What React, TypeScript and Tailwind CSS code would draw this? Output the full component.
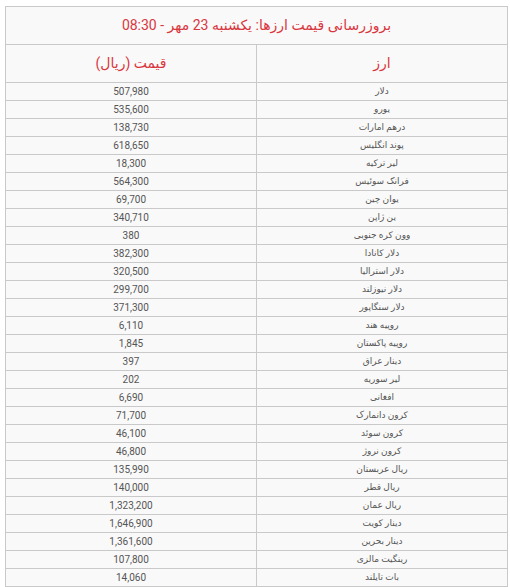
const rows: [string, string][] = [
  ['دلار', '507,980'],
  ['یورو', '535,600'],
  ['درهم امارات', '138,730'],
  ['پوند انگلیس', '618,650'],
  ['لیر ترکیه', '18,300'],
  ['فرانک سوئیس', '564,300'],
  ['یوان چین', '69,700'],
  ['ین ژاپن', '340,710'],
  ['وون کره جنوبی', '380'],
  ['دلار کانادا', '382,300'],
  ['دلار استرالیا', '320,500'],
  ['دلار نیوزلند', '299,700'],
  ['دلار سنگاپور', '371,300'],
  ['روپیه هند', '6,110'],
  ['روپیه پاکستان', '1,845'],
  ['دینار عراق', '397'],
  ['لیر سوریه', '202'],
  ['افغانی', '6,690'],
  ['کرون دانمارک', '71,700'],
  ['کرون سوئد', '46,100'],
  ['کرون نروژ', '46,800'],
  ['ریال عربستان', '135,990'],
  ['ریال قطر', '140,000'],
  ['ریال عمان', '1,323,200'],
  ['دینار کویت', '1,646,900'],
  ['دینار بحرین', '1,361,600'],
  ['رینگیت مالزی', '107,800'],
  ['بات تایلند', '14,060'],
];

export default function App() {
  return (
    <div className="min-h-[587px] bg-white pt-[6px] pl-[5px] pr-[2px] font-['Roboto','DejaVu_Sans',sans-serif]">
      <table dir="rtl" className="w-[503px] border-collapse bg-[#f9f9f9] text-[#555]">
        <thead>
          <tr>
            <th colSpan={2} className="h-[38px] border border-[#c9c9c9] text-center text-[14px] font-normal text-[#d9363e]">
              بروزرسانی قیمت ارزها: یکشنبه 23 مهر - 08:30
            </th>
          </tr>
          <tr>
            <th className="h-[38px] w-1/2 border border-[#c9c9c9] text-center text-[14px] font-normal text-[#d9363e]">ارز</th>
            <th className="h-[38px] w-1/2 border border-[#c9c9c9] text-center text-[14px] font-normal text-[#d9363e]">قیمت (ریال)</th>
          </tr>
        </thead>
        <tbody>
          {rows.map(([name, price]) => (
            <tr key={name}>
              <td className="h-[18px] border border-[#c9c9c9] p-0 text-center text-[9px] leading-none">{name}</td>
              <td className="h-[18px] border border-[#c9c9c9] p-0 text-center text-[10px] leading-none">{price}</td>
            </tr>
          ))}
        </tbody>
      </table>
    </div>
  );
}
